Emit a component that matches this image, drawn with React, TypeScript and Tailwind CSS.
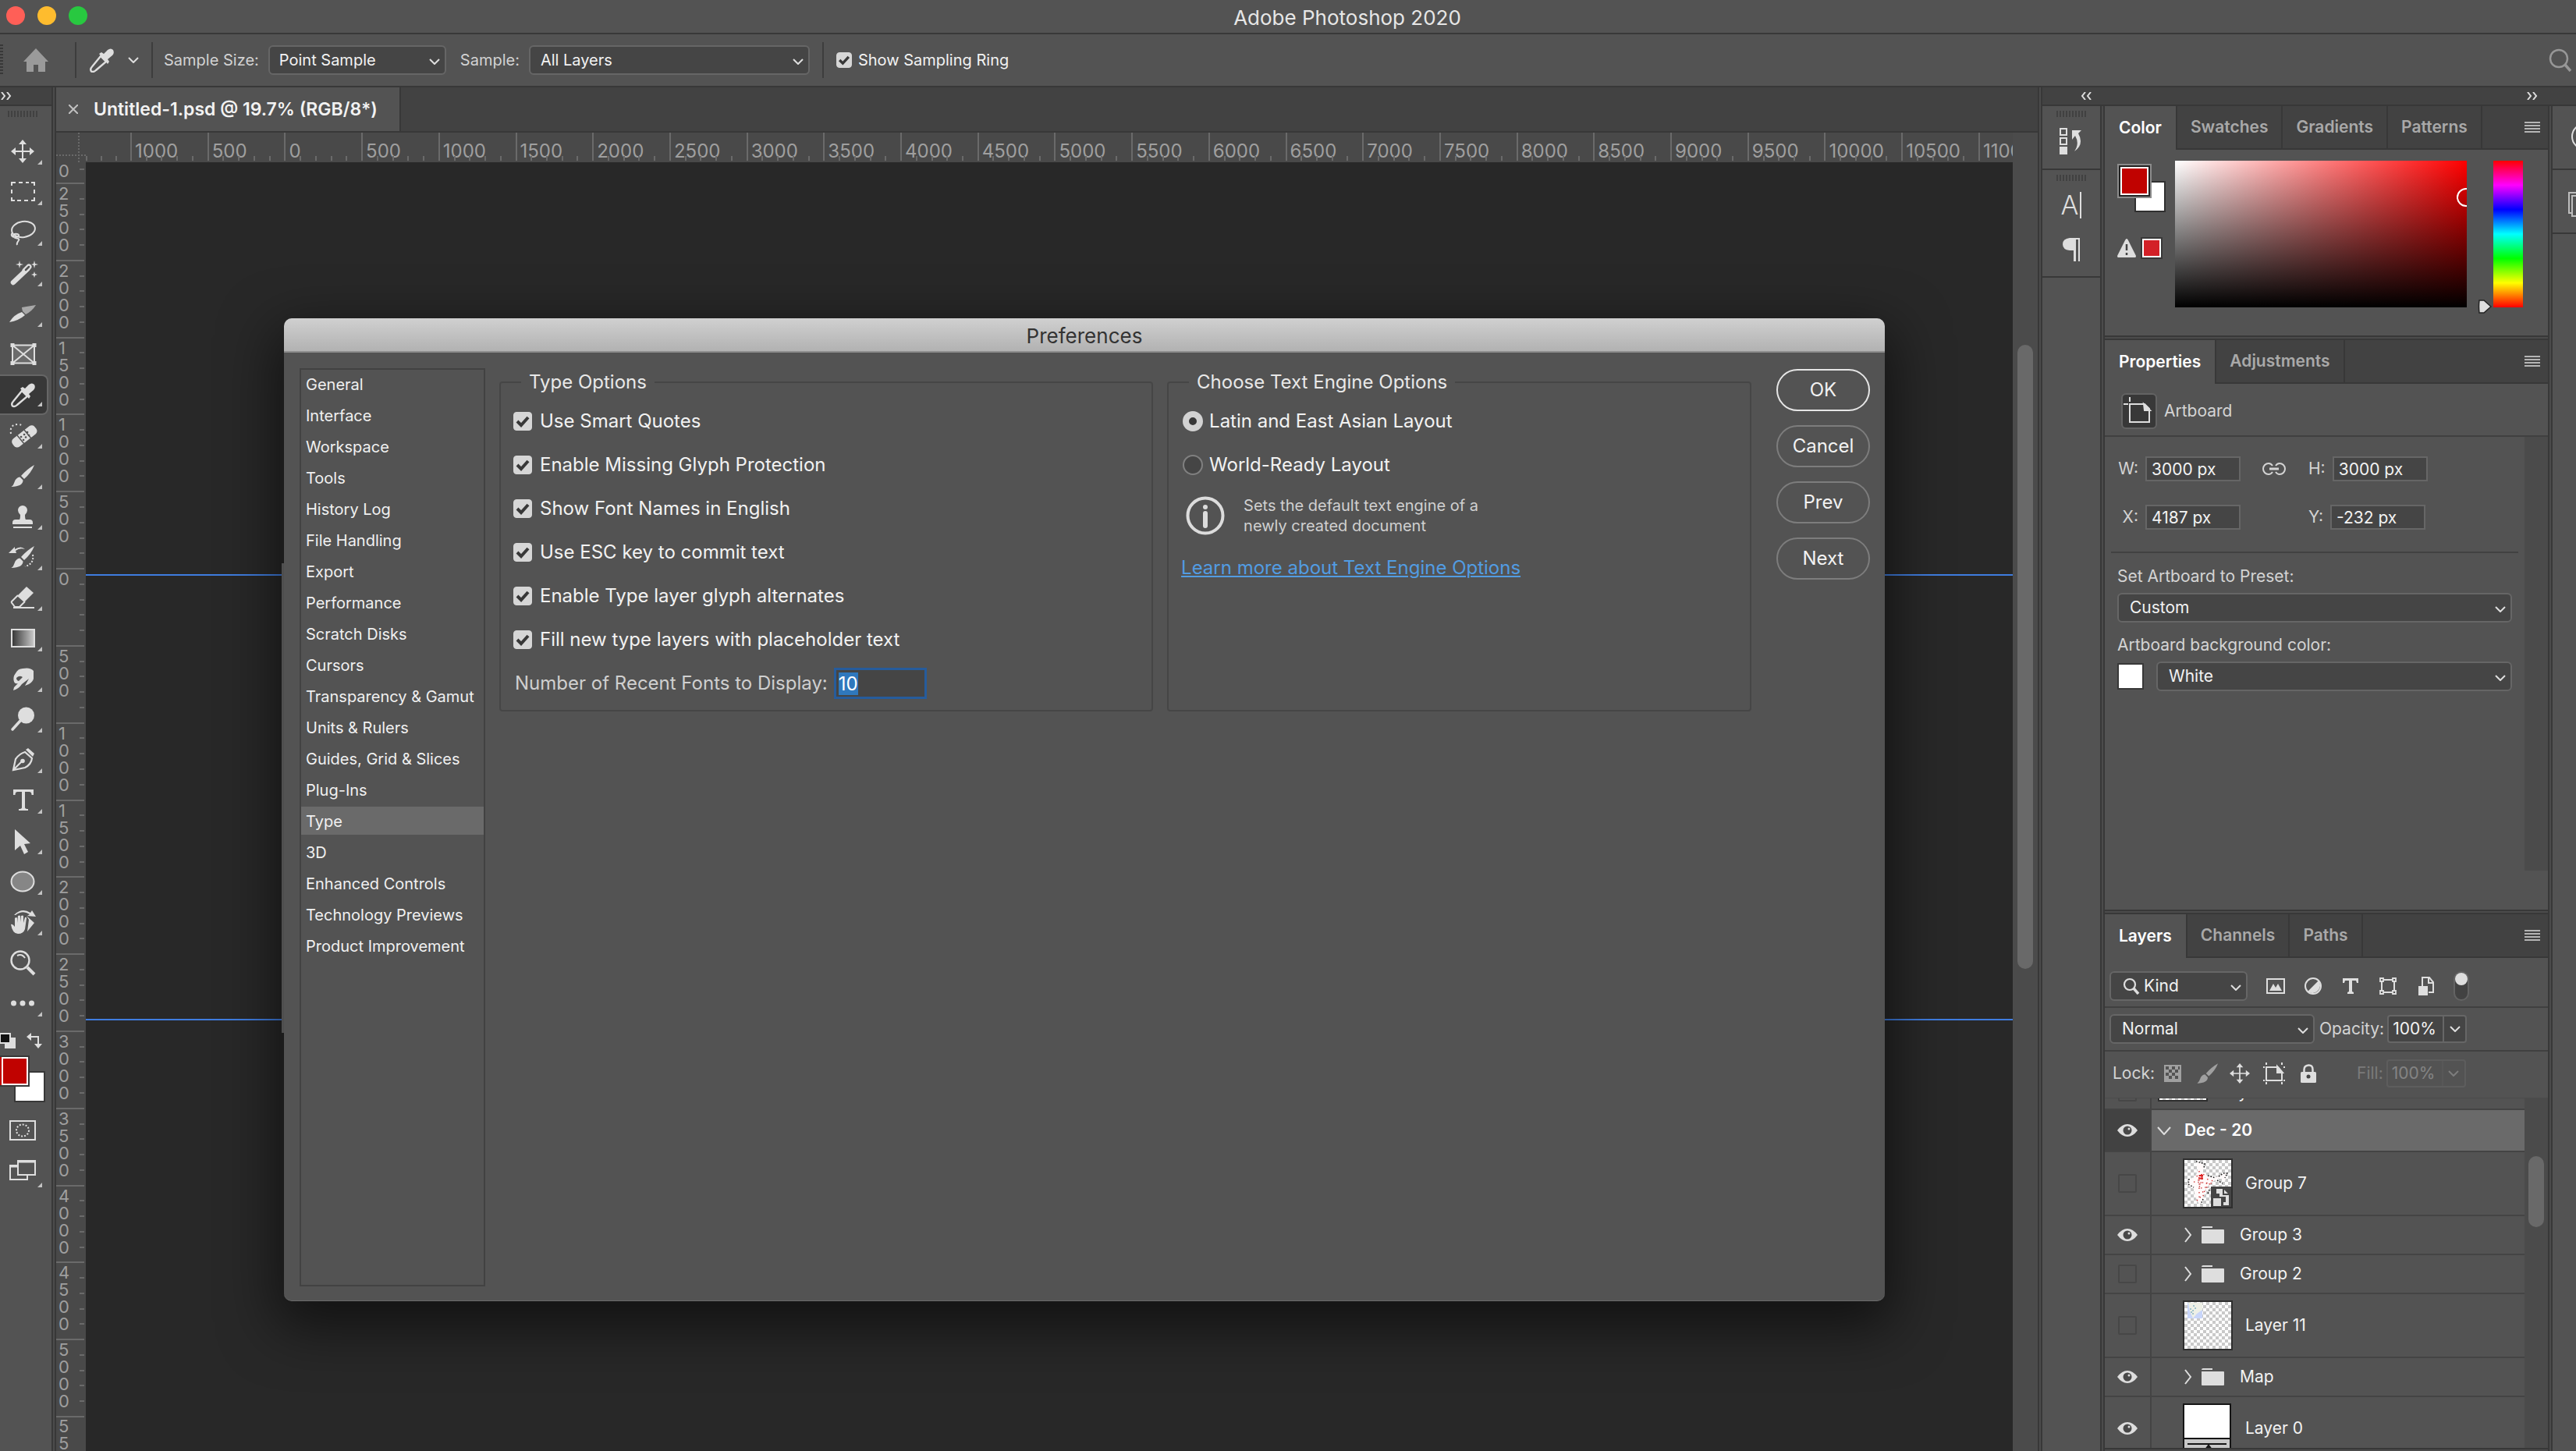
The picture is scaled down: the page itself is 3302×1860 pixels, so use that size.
import React, { useEffect, useRef, useState } from 'react';

const TOP_LABELS = [1000, 500, ...Array.from({ length: 22 }, (_, i) => i * 500)];
const LEFT_LABELS = ['2500', '2000', '1500', '1000', '500', ...Array.from({ length: 11 }, (_, i) => String(i * 500))];

const PREF_SECTIONS = [
  'General', 'Interface', 'Workspace', 'Tools', 'History Log', 'File Handling', 'Export', 'Performance',
  'Scratch Disks', 'Cursors', 'Transparency & Gamut', 'Units & Rulers', 'Guides, Grid & Slices', 'Plug-Ins',
  'Type', '3D', 'Enhanced Controls', 'Technology Previews', 'Product Improvement',
];

const TYPE_OPTIONS = [
  'Use Smart Quotes', 'Enable Missing Glyph Protection', 'Show Font Names in English',
  'Use ESC key to commit text', 'Enable Type layer glyph alternates', 'Fill new type layers with placeholder text',
];

/* ---------- small shared pieces ---------- */

const Chevron = ({ className = '' }: { className?: string }) => (
  <svg viewBox="0 0 14 8" className={`w-[14px] h-2 ${className}`} fill="none" stroke="#dedede" strokeWidth="2">
    <path d="M1 1l6 6 6-6" />
  </svg>
);

const Grip = () => (
  <div className="w-[38px] h-2 bg-[repeating-linear-gradient(90deg,#414141_0_2px,transparent_2px_4px)]" />
);

interface SelectBoxProps {
  label: string;
  options: string[];
  className?: string;
  id?: string;
  pad?: string;
}

const SelectBox: React.FC<SelectBoxProps> = ({ label, options, className = '', id, pad = 'pl-[14px]' }) => (
  <div className={`relative ${className}`}>
    <select
      id={id}
      aria-label={label}
      className={`w-full h-[38px] appearance-none bg-[#454545] border-2 border-[#666] rounded-md text-[#f2f2f2] leading-7 ${pad}`}
    >
      {options.map(o => <option key={o}>{o}</option>)}
    </select>
    <Chevron className="absolute right-2 top-[17px] pointer-events-none" />
  </div>
);

const Check: React.FC<{ label: string; big?: boolean }> = ({ label, big }) => (
  <label className={`flex items-center text-[#f2f2f2] ${big ? 'gap-[10px] h-14 text-2xl' : 'gap-2 text-xl'}`}>
    <span className={`relative shrink-0 ${big ? 'size-6' : 'size-5'}`}>
      <input type="checkbox" defaultChecked className="peer block size-full appearance-none rounded bg-[#454545] border border-[#777] checked:bg-[#d6d6d6] checked:border-[#d6d6d6]" />
      <svg viewBox="0 0 24 24" className="absolute inset-0 size-full pointer-events-none hidden peer-checked:block" fill="none" stroke="#383838" strokeWidth="4">
        <path d="M5 12l5 5 9-10" />
      </svg>
    </span>
    {label}
  </label>
);

const Tabs: React.FC<{ names: string[] }> = ({ names }) => {
  const [active, setActive] = useState(0);
  return (
    <div className="flex h-14 shrink-0 bg-[#424242] text-[21px] font-semibold" role="tablist">
      {names.map((name, i) => (
        <button
          key={name}
          role="tab"
          aria-selected={i === active}
          onClick={() => setActive(i)}
          className={`border-r-2 border-[#383838] ${i === active ? 'px-[18px] bg-[#535353] text-white' : 'px-[17px] text-[#a9a9a9] border-b-2'}`}
        >
          {name}
        </button>
      ))}
      <div className="flex-1 flex items-center justify-end pr-[10px] border-b-2 border-[#383838]">
        <button aria-label="Panel menu">
          <svg viewBox="0 0 20 14" className="w-5 h-[14px]" fill="#b5b5b5">
            <path d="M0 0h20v2H0zM0 4h20v2H0zM0 8h20v2H0zM0 12h20v2H0z" />
          </svg>
        </button>
      </div>
    </div>
  );
};

/* dark / light / dark strip between docked columns */
const VDivider = () => <div className="w-[6px] shrink-0 bg-[#4b4b4b] border-x-2 border-[#383838]" />;
const HDivider = () => <div className="h-[6px] shrink-0 bg-[#4b4b4b] border-y-2 border-[#383838]" />;

const DoubleArrow = ({ left }: { left?: boolean }) => (
  <svg viewBox="0 0 14 10" className="w-[14px] h-[10px]" fill="none" stroke="#dedede" strokeWidth="2">
    {left ? <path d="M6 0L2 5l4 5M13 0L9 5l4 5" /> : <path d="M1 0l4 5-4 5M8 0l4 5-4 5" />}
  </svg>
);

/* ---------- tool icons, 36px box ---------- */

const Dropper = () => (
  <>
    <path d="M17 13l7 7L11 31q-3 3-6 1.500q-2-3 1-6z" fill="none" stroke="currentColor" strokeWidth="2.400" />
    <path d="M15 10l3-2 3 2 5-5q4-3 7 0 2 4-1 7l-6 5 2 3-2 3z" />
  </>
);

const BrushShape = () => (
  <>
    <path d="M33 4Q24 9 16 18l4 4Q29 14 33 4z" />
    <path d="M14.500 19.500l4 4q0 8-15 8.500 3-2 4-6 2-6 7-6.500z" />
  </>
);

const MoveShape = () => (
  <path d="M18 3l5 6h-4v8h8v-4l6 5-6 5v-4h-8v8h4l-5 6-5-6h4v-8H9v4l-6-5 6-5v4h8V9h-4z" />
);

const TOOLS: { name: string; icon: React.ReactNode; plain?: boolean }[] = [
  { name: 'Move', icon: <MoveShape /> },
  {
    name: 'Marquee',
    icon: <path d="M4 10V6h5M13 6h5M22 6h4M29 6h4v4M33 15v5M33 25v4h-4M25 29h-5M16 29h-5M8 29H4v-4M4 20v-5" fill="none" stroke="currentColor" strokeWidth="2" />,
  },
  {
    name: 'Lasso',
    icon: (
      <g fill="none" stroke="currentColor" strokeWidth="2">
        <ellipse cx="19" cy="14" rx="15" ry="10" transform="rotate(-8 19 14)" />
        <path d="M5 18c-3 4 0 6 4 6s6-3 2-4-6 2-4 4 8 1 6 4-3 4-2 6" />
      </g>
    ),
  },
  {
    name: 'Magic wand',
    icon: (
      <>
        <path d="M6 30L24 13" stroke="currentColor" strokeWidth="6.500" strokeLinecap="round" />
        <path d="M21 15l5-5" stroke="currentColor" strokeWidth="7" strokeLinecap="round" />
        <path d="M22 14l4-4" stroke="#535353" strokeWidth="2.500" strokeLinecap="round" />
        <path d="M14 2l1 4 4 1-4 1-1 4-1-4-4-1 4-1zM33 2l1 4 4 1-4 1-1 4-1-4-3-1 3-1zM33 16l1 3 3 1-3 1-1 3-1-3-3-1 3-1z" />
      </>
    ),
  },
  {
    name: 'Slice',
    icon: (
      <>
        <path d="M1 29q6-10 16-13l4 4q-8 7-20 9z" />
        <path d="M17 10l18-3q-5 8-13 12l-4-4q-1-3-1-5z" fill="#a8a8a8" />
      </>
    ),
  },
  {
    name: 'Frame',
    plain: true,
    icon: (
      <>
        <path d="M5 6.500h28v23H5zM5 6.500l28 23M33 6.500l-28 23" fill="#6b6b6b" stroke="currentColor" strokeWidth="2" />
        <path d="M2.500 4h5v5h-5zM30.500 4h5v5h-5zM2.500 27h5v5h-5zM30.500 27h5v5h-5z" />
      </>
    ),
  },
  { name: 'Eyedropper', icon: <Dropper /> },
  {
    name: 'Healing brush',
    icon: (
      <>
        <rect x="2" y="13" width="36" height="13" rx="5" transform="rotate(-38 20 19)" />
        <path d="M11 18l9 11M20 11l9 11" stroke="#535353" strokeWidth="1.500" />
        <path d="M16 20h.1M20 17h.1M24 14h.1M19 24h.1M22 20.500h.1M26 18h.1" stroke="#535353" strokeWidth="2.600" strokeLinecap="round" />
        <path d="M3 16Q1 4 12 4q5 0 6 3" fill="none" stroke="currentColor" strokeWidth="2" strokeDasharray="2 3" />
      </>
    ),
  },
  { name: 'Brush', icon: <BrushShape /> },
  {
    name: 'Clone stamp',
    icon: <path d="M18 4a6 6 0 0 1 6 6q0 3-3 6 0 5 1 6h5q4 0 4 4v2H5v-2q0-4 4-4h5q1-1 1-6-3-3-3-6a6 6 0 0 1 6-6zM6 31h24v2H6z" />,
  },
  {
    name: 'History brush',
    icon: (
      <>
        <BrushShape />
        <path d="M0 13L8 5v3q8-5 13 0-7-2-12 2l1 3z" />
        <path d="M31 15q2 12-10 15" fill="none" stroke="currentColor" strokeWidth="2" strokeDasharray="2 2" />
      </>
    ),
  },
  {
    name: 'Eraser',
    icon: (
      <>
        <path d="M23 4l9 8-12 12-9-8z" />
        <path d="M12 15L4 23q-1 1 1 3l3 4h6l7-7M6 31h27" fill="none" stroke="currentColor" strokeWidth="2" />
      </>
    ),
  },
  {
    name: 'Gradient',
    icon: (
      <>
        <defs>
          <linearGradient id="toolGrad"><stop offset="0" stopColor="#333" /><stop offset="1" stopColor="#ccc" /></linearGradient>
        </defs>
        <rect x="4" y="7" width="29" height="22" fill="url(#toolGrad)" stroke="currentColor" strokeWidth="2" />
      </>
    ),
  },
  { name: 'Smudge', icon: <path d="M6 33l1-4 5-5q-4 1-5-2-2-6 2-11 3-6 9-6 10-2 14 3v10q-1 4-6 7l-5 2 5-9-9 7q-4 6-11 8zM10 17q0 3 3 4l5-5q-4-3-8 1z" fillRule="evenodd" /> },
  {
    name: 'Dodge',
    icon: <><circle cx="22.500" cy="13" r="10.500" /><path d="M15 20L5 31" stroke="currentColor" strokeWidth="3.500" strokeLinecap="round" /></>,
  },
  {
    name: 'Pen',
    icon: (
      <>
        <path d="M6 31l3-14q5-7 12-9l9 8q-1 8-9 12zM6 31l11-11" fill="none" stroke="currentColor" strokeWidth="2.200" />
        <circle cx="18" cy="19.500" r="2.800" />
        <path d="M22 5l3-2 8 7-2 4z" />
      </>
    ),
  },
  { name: 'Type', icon: <path d="M6 4h26v7h-2.500q0-4-3-4H21v20q0 2 4 2v2H13v-2q4 0 4-2V7h-5.500q-3 0-3 4H6z" /> },
  { name: 'Path selection', icon: <path d="M8 3l20 18-8 1 5 10-5 3-5-11-7 6z" /> },
  { name: 'Ellipse', icon: <ellipse cx="18" cy="18" rx="14.500" ry="12.500" fill="#868686" stroke="currentColor" strokeWidth="2" /> },
  {
    name: 'Rotate view',
    icon: (
      <>
        <path d="M3 21q2-1 5 3V13q2-2 3 0v6l1-9q2-1 3 0v8l1-8q2-1 3 0v9l2-7q2-1 2 1l-2 14q-2 6-9 6t-9-12z" />
        <path d="M7 9Q17-1 28 6l2-3 5 8-11-1 3-2Q18 2 9 9zM23 10l10 9-9 11 2-15z" />
      </>
    ),
  },
  {
    name: 'Zoom',
    plain: true,
    icon: (
      <g fill="none" stroke="currentColor">
        <circle cx="15" cy="15" r="11.500" strokeWidth="2.400" />
        <path d="M24 24l9 9" strokeWidth="4" />
        <path d="M11 9q6-3 10 3" strokeWidth="2" />
      </g>
    ),
  },
  { name: 'Edit toolbar', icon: <><circle cx="6.500" cy="18" r="3.500" /><circle cx="18" cy="18" r="3.500" /><circle cx="29.500" cy="18" r="3.500" /></> },
];

const Corner = () => (
  <svg viewBox="0 0 6 6" className="absolute left-12 bottom-[9px] size-[6px]"><path d="M6 0v6H0z" fill="#c4c4c4" /></svg>
);

const Toolbar = () => (
  <aside className="w-[66px] shrink-0 flex flex-col bg-[#535353] text-[#dedede]">
    <div className="h-6 bg-[#424242] border-b-2 border-[#383838] flex items-center pl-px"><DoubleArrow /></div>
    <div className="h-8 pt-[6px] pl-[10px]"><Grip /></div>
    {TOOLS.map((t, i) => (
      <button
        key={t.name}
        aria-label={t.name}
        className={`relative h-[52px] w-[62px] shrink-0 flex items-center pl-[11px] ${i === 6 ? 'bg-[#383838] border-y-2 border-r-2 border-[#666] rounded-r-lg' : ''}`}
      >
        <svg viewBox="0 0 36 36" className="size-9 overflow-visible" fill="currentColor">{t.icon}</svg>
        {!t.plain && <Corner />}
      </button>
    ))}
    <div className="flex justify-between items-end h-8 pr-3">
      <svg viewBox="0 0 20 20" className="size-5"><path d="M6 6h14v14H6z" fill="#dedede" /><path d="M0 1h13v12H0z" fill="#111" stroke="#dedede" strokeWidth="2" /></svg>
      <svg viewBox="0 0 20 20" className="size-5" fill="#dedede"><path d="M0 5l6-5v4h10v10h4l-5 6-5-6h4V6H6v4z" /></svg>
    </div>
    <div className="grid pt-[9px]">
      <button aria-label="Background color" className="col-start-1 row-start-1 ml-[18px] mt-5 size-10 bg-white border-2 border-[#383838]" />
      <button aria-label="Foreground color" className="col-start-1 row-start-1 w-[38px] h-10 bg-[#c00200] border-2 border-l-0 border-[#383838] outline-2 -outline-offset-4 outline-white" />
    </div>
    <button aria-label="Quick mask" className="mt-[23px] ml-3 w-[34px]">
      <svg viewBox="0 0 34 26" className="block w-[34px] h-[26px]" fill="none" stroke="#dedede" strokeWidth="2">
        <path d="M1 1h32v24H1z" /><ellipse cx="17" cy="13" rx="8" ry="7.500" strokeDasharray="2 2" />
      </svg>
    </button>
    <button aria-label="Screen mode" className="relative mt-5 pl-3 h-10 flex items-start pt-[5px]">
      <svg viewBox="0 0 34 26" className="block w-[34px] h-[26px]" fill="none" stroke="#dedede" strokeWidth="2">
        <path d="M11 7H1v18h22v-6" /><path d="M0 8h10" strokeWidth="3" /><path d="M11 1h22v18H11z" /><path d="M11 2h22" strokeWidth="3" />
      </svg>
      <svg viewBox="0 0 6 6" className="absolute left-12 bottom-0 size-[6px]"><path d="M6 0v6H0z" fill="#c4c4c4" /></svg>
    </button>
  </aside>
);

/* ---------- header ---------- */

const OptionsBar = () => (
  <div className="h-[68px] shrink-0 flex items-center border-b-2 border-[#383838] text-xl text-[#d2d2d2]">
    <div className="w-1 h-10 bg-[repeating-linear-gradient(180deg,#383838_0_2px,transparent_2px_4px)]" />
    <button aria-label="Home" className="ml-[26px]">
      <svg viewBox="0 0 32 30" className="w-8 h-[30px]" fill="#9a9a9a"><path d="M16 0l16 17h-4v13h-9v-9h-6v9H4V17H0z" /></svg>
    </button>
    <div className="ml-[34px] w-[2px] h-[46px] bg-[#3d3d3d]" />
    <button aria-label="Eyedropper presets" className="ml-4 flex items-center gap-4 text-[#dedede]">
      <svg viewBox="2 2 34 32" className="w-[34px] h-8" fill="currentColor"><Dropper /></svg>
      <Chevron />
    </button>
    <div className="ml-4 w-[2px] h-[46px] bg-[#3d3d3d]" />
    <label htmlFor="sampleSize" className="ml-[14px]">Sample Size:</label>
    <SelectBox id="sampleSize" label="Sample size" options={['Point Sample']} className="ml-3 w-[228px]" pad="pl-3" />
    <label htmlFor="sample" className="ml-[18px]">Sample:</label>
    <SelectBox id="sample" label="Sample" options={['All Layers']} className="ml-3 w-[360px]" pad="pl-[13px]" />
    <div className="ml-4 mr-4 w-[2px] h-[46px] bg-[#3d3d3d]" />
    <Check label="Show Sampling Ring" />
    <button aria-label="Search" className="ml-auto mr-[5px]">
      <svg viewBox="0 0 30 30" className="size-[30px]" fill="none" stroke="#979797" strokeWidth="2.500">
        <circle cx="13" cy="13" r="11" /><path d="M21 21l7 8" strokeWidth="3.500" />
      </svg>
    </button>
  </div>
);

/* ---------- rulers ---------- */

const TopRuler = () => (
  <div className="h-[38px] flex bg-[#494949] text-[#9f9f9f] text-2xl overflow-hidden">
    <div className="w-[38px] shrink-0 relative">
      <div className="absolute right-2 inset-y-0 border-l-2 border-dotted border-[#6a6a6a]" />
      <div className="absolute bottom-2 inset-x-0 border-t-2 border-dotted border-[#6a6a6a]" />
    </div>
    <div className="w-[57px] shrink-0 h-9 flex items-end justify-between">
      <i className="w-[2px] h-[6px] bg-[#6a6a6a]" /><i className="w-[2px] h-[6px] bg-[#6a6a6a]" /><i className="w-[2px] h-[6px] bg-[#6a6a6a]" /><i />
    </div>
    {TOP_LABELS.map((n, i) => (
      <div key={i} className="relative flex-1 h-9 border-l-2 border-[#6a6a6a] pl-1 pt-2 leading-8">
        {n}
        <div className="absolute inset-x-0 bottom-0 flex justify-evenly">
          <i className="w-[2px] h-[6px] bg-[#6a6a6a]" /><i className="w-[2px] h-[6px] bg-[#6a6a6a]" />
          <i className="w-[2px] h-[6px] bg-[#6a6a6a]" /><i className="w-[2px] h-[6px] bg-[#6a6a6a]" />
        </div>
      </div>
    ))}
    <div className="w-11 shrink-0 h-9 border-l-2 border-[#6a6a6a] pl-1 pt-2 leading-8 overflow-hidden">11000</div>
    <div className="w-8 shrink-0 bg-[#4b4b4b]" />
  </div>
);

const MinorTicks = () => (
  <div className="absolute right-0 inset-y-0 flex flex-col justify-evenly">
    <i className="w-[6px] h-[2px] bg-[#6a6a6a]" /><i className="w-[6px] h-[2px] bg-[#6a6a6a]" />
    <i className="w-[6px] h-[2px] bg-[#6a6a6a]" /><i className="w-[6px] h-[2px] bg-[#6a6a6a]" />
  </div>
);

const LeftRuler = () => (
  <div className="w-[38px] shrink-0 pr-[2px] flex flex-col bg-[#494949] text-[#9f9f9f] text-[22px] leading-[22px] overflow-hidden">
    <div className="relative h-[26px] shrink-0 pl-[3px]">0<i className="absolute right-0 top-2 w-[6px] h-[2px] bg-[#6a6a6a]" /></div>
    {LEFT_LABELS.map((n, i) => (
      <div key={i} className="relative flex-1 min-h-0 border-t-2 border-[#6a6a6a] pl-[3px] pt-px">
        {n.split('').map((d, k) => <div key={k}>{d}</div>)}
        <MinorTicks />
      </div>
    ))}
    <div className="h-[45px] shrink-0 border-t-2 border-[#6a6a6a] pl-[3px]"><div>5</div><div>5</div></div>
  </div>
);

/* ---------- preferences dialog ---------- */

const PreferencesDialog = () => {
  const [section, setSection] = useState('Type');
  const recent = useRef<HTMLInputElement>(null);

  useEffect(() => {
    recent.current?.focus();
    recent.current?.select();
  }, []);

  return (
    <div role="dialog" aria-label="Preferences" className="absolute left-[254px] right-[164px] top-[200px] bottom-[192px] flex flex-col rounded-[10px] overflow-hidden bg-[#535353] shadow-[0_24px_70px_10px_rgba(0,0,0,0.55)] border-b border-[#6b6b6b]">
      <div className="h-11 shrink-0 flex items-center justify-center pt-[2px] bg-linear-to-b from-[#d0d0d0] to-[#b2b2b2] border-b-2 border-[#8e8e8e] text-[#333] text-[26px]">
        Preferences
      </div>
      <div className="flex-1 min-h-0 flex pt-5 pl-5 pr-[19px] pb-[18px]">
        <ul className="w-[238px] shrink-0 border-2 border-[#424242] flex flex-col gap-1 text-xl text-[#f0f0f0]">
          {PREF_SECTIONS.map(s => (
            <li key={s}>
              <button
                onClick={() => setSection(s)}
                className={`block w-full h-9 pl-[6px] pt-[2px] text-left whitespace-nowrap ${s === section ? 'bg-[#6a6a6a]' : ''}`}
              >
                {s}
              </button>
            </li>
          ))}
        </ul>

        <fieldset className="mt-[2px] ml-[18px] flex-[9] min-w-0 self-start h-[438px] border-2 border-[#464646] rounded px-4 pb-2">
          <legend className="ml-[10px] px-[10px] text-2xl leading-8 text-[#e8e8e8]">Type Options</legend>
          <div className="pt-[6px]">
            {TYPE_OPTIONS.map(o => <Check key={o} label={o} big />)}
          </div>
          <div className="flex items-center h-14 text-2xl text-[#cfcfcf]">
            <label htmlFor="recentFonts" className="ml-[2px]">Number of Recent Fonts to Display:</label>
            <input
              id="recentFonts"
              ref={recent}
              defaultValue="10"
              className="ml-2 w-[119px] h-10 px-[3px] bg-[#454545] border-[3px] border-[#265c9c] outline-none text-[#f2f2f2] leading-8 selection:bg-[#2f78bd] selection:text-white"
            />
          </div>
        </fieldset>

        <fieldset className="mt-[2px] ml-[18px] flex-[8] min-w-0 self-start h-[438px] border-2 border-[#464646] rounded px-4">
          <legend className="ml-[10px] px-[10px] text-2xl leading-8 text-[#e8e8e8]">Choose Text Engine Options</legend>
          <div className="pt-[6px] text-2xl text-[#f2f2f2]">
            {['Latin and East Asian Layout', 'World-Ready Layout'].map((o, i) => (
              <label key={o} className="flex items-center gap-2 h-14 pl-[2px]">
                <input
                  type="radio"
                  name="engine"
                  defaultChecked={i === 0}
                  className="size-[26px] appearance-none rounded-full bg-[#454545] border-2 border-[#808080] checked:border-[8px] checked:border-[#d2d2d2] checked:bg-[#383838]"
                />
                {o}
              </label>
            ))}
          </div>
          <div className="flex items-center gap-6 mt-[11px] pl-[6px] text-xl leading-[26px] text-[#d0d0d0]">
            <svg viewBox="0 0 50 50" className="size-[50px]" fill="none" stroke="#dcdcdc" strokeWidth="4">
              <circle cx="25" cy="25" r="22.500" /><path d="M25 22v16" strokeWidth="6" strokeLinecap="round" /><path d="M25 14v.1" strokeWidth="6" strokeLinecap="round" />
            </svg>
            <p>Sets the default text engine of a<br />newly created document</p>
          </div>
          <a href="#engine" className="block mt-[25px] text-2xl leading-8 text-[#529ce2] underline decoration-2 underline-offset-2">
            Learn more about Text Engine Options
          </a>
        </fieldset>

        <div className="ml-8 w-[120px] shrink-0 flex flex-col gap-[18px] pt-px text-2xl text-[#f2f2f2]">
          {['OK', 'Cancel', 'Prev', 'Next'].map((b, i) => (
            <button key={b} className={`h-[54px] rounded-full border-2 ${i === 0 ? 'border-[#e6e6e6]' : 'border-[#7d7d7d]'}`}>{b}</button>
          ))}
        </div>
      </div>
    </div>
  );
};

const DocumentArea = () => (
  <main className="flex-1 min-w-0 flex flex-col">
    <div className="h-[58px] shrink-0 bg-[#424242] border-b-2 border-[#383838] flex">
      <div className="flex items-center bg-[#535353] border-r-2 border-[#383838] pl-4 pr-7 text-[23px] font-semibold text-[#f2f2f2]">
        <button aria-label="Close tab" className="mr-5">
          <svg viewBox="0 0 12 12" className="size-3" fill="none" stroke="#c0c0c0" strokeWidth="2"><path d="M0 0l12 12M12 0L0 12" /></svg>
        </button>
        Untitled-1.psd @ 19.7% (RGB/8*)
      </div>
    </div>
    <TopRuler />
    <div className="flex-1 min-h-0 flex">
      <LeftRuler />
      <div className="relative flex-1 overflow-hidden bg-[#282828]">
        <div className="absolute inset-x-0 top-[528px] h-[2px] bg-[#3f7de0]" />
        <div className="absolute inset-x-0 top-[1098px] h-[2px] bg-[#3f7de0]" />
        <div className="absolute left-[251px] top-[514px] w-[3px] h-[602px] bg-[#757575]" />
        <PreferencesDialog />
      </div>
      <div className="w-8 shrink-0 bg-[#4b4b4b] pt-[234px] flex justify-center">
        <div className="w-5 h-[800px] rounded-full bg-[#696969]" />
      </div>
    </div>
  </main>
);

/* ---------- right side panels ---------- */

const ColorPanel = () => (
  <section className="shrink-0">
    <Tabs names={['Color', 'Swatches', 'Gradients', 'Patterns']} />
    <div className="flex h-[238px] pt-[14px] pl-4">
      <div className="w-[74px] shrink-0 pt-1">
        <div className="grid">
          <button aria-label="Background" className="col-start-1 row-start-1 ml-[22px] mt-[22px] size-10 bg-white border-2 border-[#303030]" />
          <button aria-label="Foreground" className="col-start-1 row-start-1 size-11 border-2 border-[#8c8c8c] bg-[#222] p-[2px]">
            <span className="block size-full border-2 border-white bg-[#c00200]" />
          </button>
        </div>
        <div className="flex items-center gap-[6px] mt-8">
          <svg viewBox="0 0 24 24" className="size-6" fill="#dedede"><path d="M12 0q1 0 2 2l10 20q0 2-1 2H1q-1 0-1-2L10 2q1-2 2-2z" /><path d="M12 7v8M12 18v3" stroke="#444" strokeWidth="2.500" /></svg>
          <button aria-label="Closest printable color" className="size-7 border-2 border-[#383838] bg-white p-[2px]"><span className="block size-full bg-[#d32027]" /></button>
        </div>
      </div>
      <div className="relative flex-1 h-[188px] overflow-hidden bg-[linear-gradient(to_top,#000,transparent),linear-gradient(to_right,#fff,#f00)]">
        <div className="absolute -right-[11px] top-[35px] size-6 rounded-full border-2 border-white" />
      </div>
      <div className="relative ml-[34px] mr-8 w-[38px] h-[188px] bg-[linear-gradient(to_bottom,#f00,#f0f,#00f,#0ff,#0f0,#ff0,#f00)]">
        <svg viewBox="0 0 18 18" className="absolute -left-5 -bottom-2 size-[18px]" fill="#dedede" stroke="#222" strokeWidth="1.500"><path d="M2 1h6l9 8-9 8H2q-1-8 0-16z" /></svg>
      </div>
    </div>
  </section>
);

const Field = ({ label, value, wide }: { label: string; value: string; wide?: boolean }) => (
  <label className="flex items-center gap-[9px]">
    <span className={wide ? 'w-[26px] text-right' : ''}>{label}:</span>
    <input defaultValue={value} className="w-[122px] h-8 pl-[6px] bg-[#454545] border-2 border-[#666] text-[#f2f2f2]" />
  </label>
);

const PropertiesPanel = () => (
  <section className="shrink-0 text-[21px] text-[#d4d4d4]">
    <Tabs names={['Properties', 'Adjustments']} />
    <div className="h-[68px] border-b-2 border-[#404040] flex items-center pt-[3px] pl-[21px] gap-[9px]">
      <span className="size-[46px] bg-[#383838] border-2 border-[#636363] rounded-md">
        <svg viewBox="0 0 42 42" fill="none" stroke="#dedede" strokeWidth="2">
          <path d="M9 12h19l6 6v17H9zM9 3v6M1 12h6" /><path d="M27 12l8 8h-7z" fill="#dedede" />
        </svg>
      </span>
      Artboard
    </div>
    <div className="flex h-[606px]">
      <div className="flex-1">
        <div className="mt-[25px] pl-[17px] flex items-center">
          <Field label="W" value="3000 px" wide />
          <svg viewBox="0 0 30 16" className="ml-7 mr-[29px] w-[30px] h-4" fill="none" stroke="#d4d4d4" strokeWidth="2">
            <path d="M13 4Q11 1 8 1a7 7 0 0 0 0 14q3 0 5-3M17 4q2-3 5-3a7 7 0 0 1 0 14q-3 0-5-3" /><path d="M9 8h12" strokeWidth="3" />
          </svg>
          <Field label="H" value="3000 px" />
        </div>
        <div className="mt-[30px] pl-[17px] flex items-center gap-[87px]">
          <Field label="X" value="4187 px" wide />
          <Field label="Y" value="-232 px" />
        </div>
        <div className="mx-2 mt-7 h-[2px] bg-[#414141]" />
        <div className="pl-4 pr-4">
          <label htmlFor="preset" className="block mt-4 mb-[7px] leading-7">Set Artboard to Preset:</label>
          <SelectBox id="preset" label="Preset" options={['Custom']} />
          <label htmlFor="bgColor" className="block mt-[15px] mb-[7px] leading-7">Artboard background color:</label>
          <div className="flex items-center gap-4">
            <button aria-label="Background swatch" className="size-[34px] bg-white border-2 border-[#383838]" />
            <SelectBox id="bgColor" label="Background" options={['White']} className="flex-1" />
          </div>
        </div>
      </div>
      <div className="w-[30px] bg-[#4b4b4b] mb-[50px]" />
    </div>
  </section>
);

const PercentBox = ({ label, dim }: { label: string; dim?: boolean }) => (
  <div className={`flex items-center gap-1 ${dim ? 'opacity-30' : ''}`}>
    <label htmlFor={label}>{label}:</label>
    <div className={`flex h-9 w-[102px] rounded border-2 ${dim ? 'border-[#777]' : 'border-[#666] bg-[#454545]'}`}>
      <input id={label} disabled={dim} defaultValue="100%" className="w-[71px] pl-[5px] text-[#f2f2f2] border-r-2 border-[#666]" />
      <button aria-label={`${label} slider`} disabled={dim} className="flex-1 flex items-center justify-center"><Chevron /></button>
    </div>
  </div>
);

const Eye = () => (
  <svg viewBox="0 0 26 16" className="w-[26px] h-4"><path d="M0 8Q6 0 13 0t13 8q-6 8-13 8T0 8z" fill="#dedede" /><circle cx="13" cy="8" r="5.500" fill="#484848" /><circle cx="15" cy="6" r="1.500" fill="#dedede" /></svg>
);

const CHECKER = 'bg-[repeating-conic-gradient(#c9c9c9_0_25%,#fff_0_50%)] bg-[length:8px_8px]';

const MapThumb = () => (
  <span className={`relative block size-16 border-2 border-[#2e2e2e] ${CHECKER}`}>
    <svg viewBox="0 0 60 60" className="size-full">
      <path d="M15 2l9 3 2 5-4 4 5 5 12 4 10-5 6-2-3 12-6-6-10 6-8 8-3 10-5 13-6-12-2-10-8-5 2-8 8-2 3-9z" fill="#fffafa" />
      <path d="M15 2l5 1 6 2-1 5M6 24l-1 7 7 4M30 20l10 3M44 21l6-4 5 0-3 6M42 26l7 4M32 38l-2 5M24 50l-3 7" fill="none" stroke="#222" strokeWidth="1.600" strokeDasharray="1.600 2" />
      <path d="M19 14v34M16 20l8 22M25 18l-7 20M30 24l-7 26M36 26l-8 10M12 28l24 2M16 52l6-6" stroke="#c33" strokeWidth="1.400" strokeDasharray="1.400 4" />
      <path d="M19 20h5M18 23l5 1M22 18l1 7" stroke="#d22" strokeWidth="1.800" />
    </svg>
    <svg viewBox="0 0 26 26" className="absolute right-0 bottom-0 size-[26px] bg-[#454545]"><path d="M7 3h9l7 7v14h-7v-4h3v-7h-8v-4H7z" fill="#dedede" /><path d="M3 15h10v10H3z" fill="#dedede" /><path d="M16 3v7h7" fill="none" stroke="#454545" strokeWidth="2" /></svg>
  </span>
);

interface LayerRow {
  name: string;
  on: boolean;
  kind: 'board' | 'smart' | 'group' | 'image' | 'fill' | 'strip';
  h: string;
}

const LAYERS: LayerRow[] = [
  { name: 'Layer 12', on: false, kind: 'strip', h: 'h-11' },
  { name: 'Dec - 20', on: true, kind: 'board', h: 'h-[54px]' },
  { name: 'Group 7', on: false, kind: 'smart', h: 'h-[82px]' },
  { name: 'Group 3', on: true, kind: 'group', h: 'h-[50px]' },
  { name: 'Group 2', on: false, kind: 'group', h: 'h-[50px]' },
  { name: 'Layer 11', on: false, kind: 'image', h: 'h-[82px]' },
  { name: 'Map', on: true, kind: 'group', h: 'h-[50px]' },
  { name: 'Layer 0', on: true, kind: 'fill', h: 'h-[82px]' },
];

const LayerItem: React.FC<{ layer: LayerRow }> = ({ layer }) => {
  const { kind, name, on, h } = layer;
  const board = kind === 'board';
  return (
    <li className={`flex shrink-0 border-b-2 border-[#444] ${h}`}>
      <button aria-label={`Toggle ${name}`} className={`w-[60px] shrink-0 flex items-center justify-center ${board ? 'bg-[#424242]' : ''} border-r-2 border-[#444]`}>
        {on ? <Eye /> : <span className="size-6 border-2 border-[#474747] rounded-xs" />}
      </button>
      <div className={`flex-1 flex items-center ${board ? 'bg-[#6a6a6a] font-semibold text-white' : ''}`}>
        {board && (
          <svg viewBox="0 0 18 11" className="w-[18px] h-[11px] ml-[7px] mr-[17px]" fill="none" stroke="#dedede" strokeWidth="2"><path d="M1 1l8 9 8-9" /></svg>
        )}
        {kind === 'strip' && <span className={`ml-2 mr-4 w-16 h-6 border-2 border-[#2e2e2e] ${CHECKER}`} />}
        {kind === 'smart' && <span className="ml-10 mr-4"><MapThumb /></span>}
        {kind === 'image' && (
          <span className={`ml-10 mr-4 size-16 border-2 border-[#2e2e2e] ${CHECKER}`}>
            <svg viewBox="0 0 60 60"><path d="M4 1h19v20H4z" fill="#c9d6fa" /><path d="M5 1h18v9l-7 5-5 6-4-9z" fill="#eef0e6" /><path d="M8 9h.1M11 11h.1M14 8h.1M11 15h.1M9 13h.1M12 5h.1" stroke="#3a86a8" strokeWidth="1.500" strokeLinecap="round" /></svg>
          </span>
        )}
        {kind === 'fill' && (
          <span className="ml-10 mr-[18px] w-[62px] h-16 border-2 border-[#151515] bg-white flex flex-col justify-end">
            <svg viewBox="0 0 58 18" className="w-full h-[18px] bg-[#c8c8c8]"><path d="M0 0h58v2H0zM4 7h50v2H4zM31 8l6 8H25z" fill="#151515" /></svg>
          </span>
        )}
        {kind === 'group' && (
          <>
            <svg viewBox="0 0 10 20" className="ml-[42px] w-[10px] h-5" fill="none" stroke="#dedede" strokeWidth="2"><path d="M1 1l7 9-7 9" /></svg>
            <svg viewBox="0 0 29 22" className="ml-[12px] mr-5 w-[29px] h-[22px]" fill="#dedede"><path d="M0 2q0-2 2-2h12v2zM0 4h28q1 0 1 1v16q0 1-1 1H1q-1 0-1-1z" /></svg>
          </>
        )}
        <span>{name}</span>
      </div>
    </li>
  );
};

const LayersPanel = () => (
  <section className="flex-1 min-h-0 flex flex-col text-[21px] text-[#d4d4d4]">
    <Tabs names={['Layers', 'Channels', 'Paths']} />
    <div className="h-16 shrink-0 flex items-center pt-[10px] pl-[6px] border-b-2 border-[#404040]">
      <div className="relative">
        <SelectBox label="Filter kind" options={['Kind']} className="w-[177px]" pad="pl-[42px]" />
        <svg viewBox="0 0 22 22" className="absolute left-[17px] top-2 size-[22px] pointer-events-none" fill="none" stroke="#dedede" strokeWidth="2.200"><circle cx="9" cy="9" r="7" /><path d="M14 14l6 7" strokeWidth="3.500" /></svg>
      </div>
      <div className="flex items-center ml-6 gap-[25px]">
        <button aria-label="Pixel layers"><svg viewBox="0 0 24 20" className="block w-6 h-5" fill="none" stroke="#dedede" strokeWidth="2"><path d="M1 1h22v18H1z" /><path d="M4 16l5-9 3 5 3-5 5 9z" fill="#dedede" stroke="none" /></svg></button>
        <button aria-label="Adjustment layers"><svg viewBox="0 0 22 22" className="block size-[22px]"><circle cx="11" cy="11" r="10" fill="none" stroke="#dedede" strokeWidth="2" /><path d="M18 4A10 10 0 0 1 4 18z" fill="#dedede" /></svg></button>
        <button aria-label="Type layers" className="mx-[2px]"><svg viewBox="0 0 20 20" className="block size-5" fill="#dedede"><path d="M0 0h20v6h-2l-1-3h-5v14l2 1v2H6v-2l2-1V3H3L2 6H0z" /></svg></button>
        <button aria-label="Shape layers"><svg viewBox="0 0 22 22" className="block size-[22px]" fill="none" stroke="#dedede" strokeWidth="2"><path d="M3 3h16v16H3z" /><path d="M1 1h4v4H1zM17 1h4v4h-4zM1 17h4v4H1zM17 17h4v4h-4z" fill="#535353" strokeWidth="1.800" /></svg></button>
        <button aria-label="Smart objects" className="ml-[3px]"><svg viewBox="0 0 20 24" className="block w-5 h-6"><path d="M5 12V1h9l5 6v13h-6M13 1v7h6" fill="none" stroke="#dedede" strokeWidth="2" /><path d="M0 12h12v12H0z" fill="#dedede" /></svg></button>
        <button aria-label="Toggle filtering" className="w-5 h-[38px] rounded-full border-2 border-[#636363] bg-[#424242] flex justify-center items-start"><span className="size-4 rounded-full bg-[#dedede]" /></button>
      </div>
    </div>
    <div className="h-14 shrink-0 flex items-center gap-[6px] pl-[6px] border-b-2 border-[#404040]">
      <SelectBox label="Blend mode" options={['Normal']} className="w-[263px]" />
      <PercentBox label="Opacity" />
    </div>
    <div className="h-[59px] shrink-0 flex items-center pb-[3px] pl-[10px]">
      <span>Lock:</span>
      <svg viewBox="0 0 22 22" className="ml-3 size-[22px]" fill="#a0a0a0"><path d="M0 0h22v22H0zM2 2v4h4V2zM10 2v4h4V2zM18 2v4h2V2zM6 6v4h4V6zM14 6v4h4V6zM2 10v4h4v-4zM10 10v4h4v-4zM6 14v4h4v-4zM14 14v4h4v-4z" fillRule="evenodd" /></svg>
      <svg viewBox="3 3 31 30" className="ml-5 size-[28px]" fill="#a0a0a0"><BrushShape /></svg>
      <svg viewBox="3 3 30 30" className="ml-[14px] size-[26px]" fill="#dedede"><MoveShape /></svg>
      <svg viewBox="0 0 28 28" className="ml-[17px] size-7" fill="none" stroke="#dedede" strokeWidth="2"><path d="M4 6h15l5 6v11H4z" /><path d="M18 5v8h7z" fill="#dedede" /><path d="M4 0v3M0 6h2M0 23h2M4 25v3M24 25v3M26 23h2M26 6h2M24 0v3" /></svg>
      <svg viewBox="0 0 20 24" className="ml-5 w-5 h-6"><path d="M4.500 11V7q0-5 5.500-5.500T15.500 7v4" fill="none" stroke="#dedede" strokeWidth="2.500" /><rect y="10" width="20" height="14" rx="1.500" fill="#dedede" /><circle cx="10" cy="16" r="2.500" fill="#444" /></svg>
      <div className="ml-[52px]"><PercentBox label="Fill" dim /></div>
    </div>
    <div className="flex-1 min-h-0 flex border-t border-[#4b4b4b]">
      <div className="flex-1 overflow-hidden text-[#f2f2f2]">
        <ul className="-mt-[29px] flex flex-col">
          {LAYERS.map(l => <LayerItem key={l.name} layer={l} />)}
        </ul>
      </div>
      <div className="w-[30px] bg-[#4b4b4b] pt-[74px] flex justify-center"><div className="w-5 h-[91px] rounded-full bg-[#696969]" /></div>
    </div>
    <div className="h-1 shrink-0 border-t-2 border-[#383838] bg-[#4b4b4b]" />
  </section>
);

const IconRail = () => (
  <aside className="w-[74px] shrink-0 bg-[#535353] text-[#dedede]">
    <div className="h-[82px] border-b-2 border-[#383838] flex flex-col items-center pt-[6px] gap-[14px]">
      <Grip />
      <button aria-label="History">
        <svg viewBox="0 0 30 34" className="w-[30px] h-[34px]" fill="none" stroke="currentColor" strokeWidth="2">
          <path d="M1 1h8v8H1zM1 13h8v8H1z" /><path d="M0 24h10v10H0z" fill="currentColor" stroke="none" />
          <path d="M16 3h12l-4 4q8 14-5 23 7-10 1-20l-4 5z" fill="currentColor" stroke="none" />
        </svg>
      </button>
    </div>
    <div className="h-[138px] border-b-2 border-[#383838] flex flex-col items-center pt-[6px]">
      <Grip />
      <button aria-label="Character" className="mt-[14px] flex items-center h-[34px] text-[34px] leading-[34px] font-light">A<span className="ml-[2px] w-[2px] h-[34px] bg-[#dedede]" /></button>
      <button aria-label="Paragraph" className="mt-[25px]">
        <svg viewBox="0 0 22 30" className="block w-[22px] h-[30px]" fill="currentColor"><path d="M9 0h13v30h-2V2h-3v28h-3V16H9Q0 15 0 8t9-8z" /></svg>
      </button>
    </div>
  </aside>
);

const EdgeRail = () => (
  <aside className="flex-1 bg-[#535353] overflow-hidden">
    <div className="h-[82px] border-b-2 border-[#383838] pt-[22px] pl-6">
      <svg viewBox="0 0 34 34" className="size-[34px] max-w-none" fill="none" stroke="#dedede" strokeWidth="2"><circle cx="17" cy="17" r="16" /></svg>
    </div>
    <div className="h-[82px] border-b-2 border-[#383838] pt-7 pl-5">
      <svg viewBox="0 0 32 32" className="size-8 max-w-none" fill="none" stroke="#bdbdbd" strokeWidth="2"><path d="M4 27H1V1h20v3" /><path d="M5 5h22v26H5z" /></svg>
    </div>
  </aside>
);

const App: React.FC = () => (
  <div className="h-screen flex flex-col overflow-hidden bg-[#535353] font-[Inter,'Liberation_Sans',sans-serif]">
    <header className="relative h-11 shrink-0 flex items-center justify-center pt-[2px] pl-[152px] border-b-2 border-[#383838] text-[26px] text-[#e6e6e6]">
      <div className="absolute left-2 top-2 flex gap-4">
        <button aria-label="Close" className="size-6 rounded-full bg-[#ff5f57]" />
        <button aria-label="Minimize" className="size-6 rounded-full bg-[#febc2e]" />
        <button aria-label="Zoom window" className="size-6 rounded-full bg-[#28c840]" />
      </div>
      <h1>Adobe Photoshop 2020</h1>
    </header>
    <OptionsBar />
    <div className="flex-1 min-h-0 flex">
      <Toolbar />
      <VDivider />
      <DocumentArea />
      <VDivider />
      <div className="w-[684px] shrink-0 flex flex-col">
        <div className="h-6 shrink-0 bg-[#424242] border-b-2 border-[#383838] flex items-center justify-between pl-[49px] pr-[49px]">
          <DoubleArrow left />
          <DoubleArrow />
        </div>
        <div className="flex-1 min-h-0 flex">
          <IconRail />
          <VDivider />
          <div className="w-[568px] shrink-0 flex flex-col">
            <ColorPanel />
            <HDivider />
            <PropertiesPanel />
            <HDivider />
            <LayersPanel />
          </div>
          <VDivider />
          <EdgeRail />
        </div>
      </div>
    </div>
  </div>
);

export default App;
